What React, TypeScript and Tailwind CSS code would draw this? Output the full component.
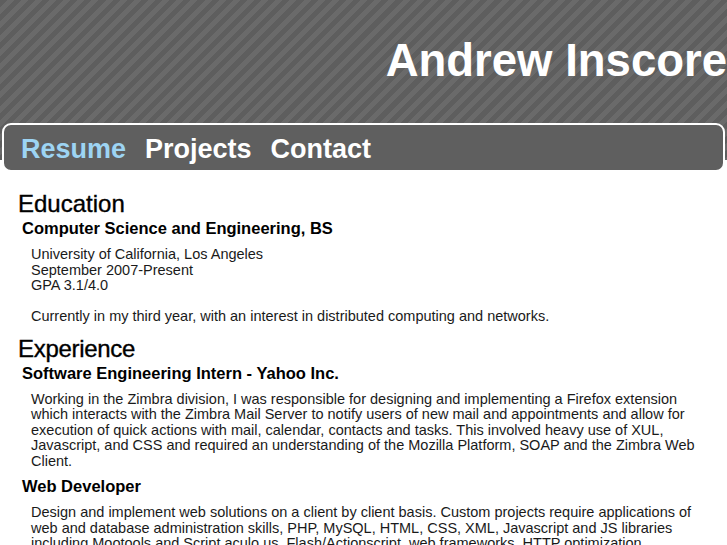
import React from 'react';

const navItems = [
  { label: 'Resume', active: true },
  { label: 'Projects', active: false },
  { label: 'Contact', active: false },
];

function Header() {
  return (
    <>
      <div className="h-[160px] pt-[38px] bg-[repeating-linear-gradient(135deg,#5e5e5e_0px,#5e5e5e_5px,#6a6a6a_5px,#6a6a6a_10px)]">
        <h1 className="flex justify-end text-[45.5px] leading-[45px] font-bold text-white whitespace-nowrap">
          Andrew Inscore
        </h1>
      </div>
      <nav className="relative -mt-[37px] mx-[2px] h-[49px] rounded-[9px] border-2 border-white bg-[#5f5f5f] flex items-center gap-[19px] pl-[17px] pt-[4px]">
        {navItems.map((item) => (
          <a
            key={item.label}
            href="#"
            className={`text-[27px] leading-none font-bold ${item.active ? 'text-[#9dd4f3]' : 'text-white'}`}
          >
            {item.label}
          </a>
        ))}
      </nav>
    </>
  );
}

const h2Class = 'text-[24px] leading-[26px] text-black mb-[1px] pl-[1px] [-webkit-text-stroke:0.35px_black]';
const h3Class = 'pl-[5px] text-[16.5px] leading-[20px] font-bold text-black mb-[9px]';
const pClass = 'pl-[14px] text-[14.5px] leading-[15.5px] whitespace-nowrap mb-[7px]';

export default function App() {
  return (
    <div className="min-h-screen bg-white font-['Liberation_Sans',Arial,sans-serif] overflow-hidden">
      <Header />

      <main className="pt-[19px] pl-[17px] pr-[20px] text-[#1a1a1a]">
        {/* Education */}
        <h2 className={h2Class}>Education</h2>
        <h3 className={h3Class}>Computer Science and Engineering, BS</h3>
        <p className={pClass}>
          University of California, Los Angeles
          <br />
          September 2007-Present
          <br />
          GPA 3.1/4.0
          <br />
          <br />
          Currently in my third year, with an interest in distributed computing and networks.
        </p>

        {/* Experience */}
        <h2 className={`mt-[11px] tracking-[-0.3px] ${h2Class}`}>Experience</h2>
        <h3 className={h3Class}>Software Engineering Intern - Yahoo Inc.</h3>
        <p className={pClass}>
          Working in the Zimbra division, I was responsible for designing and implementing a Firefox extension
          <br />
          which interacts with the Zimbra Mail Server to notify users of new mail and appointments and allow for
          <br />
          execution of quick actions with mail, calendar, contacts and tasks. This involved heavy use of XUL,
          <br />
          Javascript, and CSS and required an understanding of the Mozilla Platform, SOAP and the Zimbra Web
          <br />
          Client.
        </p>

        <h3 className={h3Class}>Web Developer</h3>
        <p className={pClass}>
          Design and implement web solutions on a client by client basis. Custom projects require applications of
          <br />
          web and database administration skills, PHP, MySQL, HTML, CSS, XML, Javascript and JS libraries
          <br />
          including Mootools and Script.aculo.us, Flash/Actionscript, web frameworks, HTTP optimization
          <br />
          and search engine optimization.
        </p>
      </main>
    </div>
  );
}
